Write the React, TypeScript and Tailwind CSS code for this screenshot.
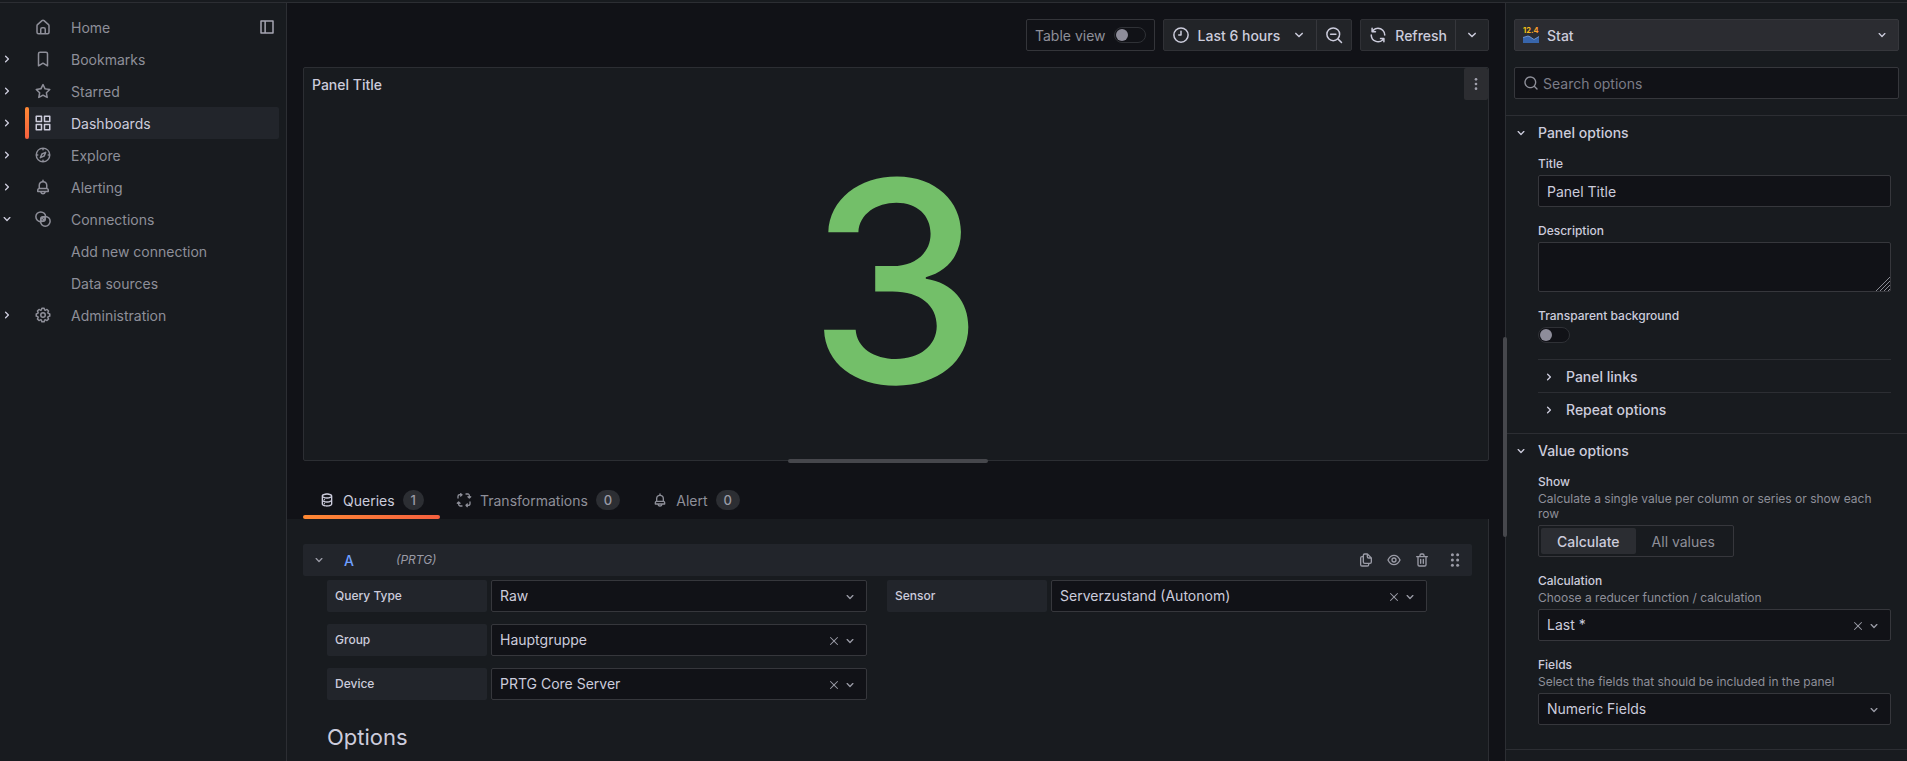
import { useState, type ReactNode } from "react";

const paths = {
  down: "M17,9.17a1,1,0,0,0-1.41,0L12,12.71,8.46,9.17a1,1,0,0,0-1.41,0,1,1,0,0,0,0,1.42l4.24,4.24a1,1,0,0,0,1.42,0L17,10.59A1,1,0,0,0,17,9.17Z",
  right: "M14.83,11.29,10.59,7.05a1,1,0,0,0-1.42,0,1,1,0,0,0,0,1.41L12.71,12,9.17,15.54a1,1,0,0,0,0,1.41,1,1,0,0,0,.71.29,1,1,0,0,0,.71-.29l4.24-4.24A1,1,0,0,0,14.83,11.29Z",
  home: "M20,8h0L14,2.74a3,3,0,0,0-4,0L4,8a3,3,0,0,0-1,2.26V19a3,3,0,0,0,3,3H18a3,3,0,0,0,3-3V10.25A3,3,0,0,0,20,8ZM14,20H10V15a1,1,0,0,1,1-1h2a1,1,0,0,1,1,1Zm5-1a1,1,0,0,1-1,1H16V15a3,3,0,0,0-3-3H11a3,3,0,0,0-3,3v5H6a1,1,0,0,1-1-1V10.25a1,1,0,0,1,.34-.75l6-5.25a1,1,0,0,1,1.32,0l6,5.25a1,1,0,0,1,.34.75Z",
  bookmark: "M16,2H8A3,3,0,0,0,5,5V21a1,1,0,0,0,.5.87,1,1,0,0,0,1,0L12,18.69l5.5,3.18A1,1,0,0,0,18,22a1,1,0,0,0,.5-.13A1,1,0,0,0,19,21V5A3,3,0,0,0,16,2Zm1,17.27-4.5-2.6a1,1,0,0,0-1,0L7,19.27V5A1,1,0,0,1,8,4h8a1,1,0,0,1,1,1Z",
  star: "M22,9.67A1,1,0,0,0,21.14,9l-5.69-.83L12.9,3a1,1,0,0,0-1.8,0L8.55,8.16,2.86,9a1,1,0,0,0-.81.68,1,1,0,0,0,.25,1l4.13,4-1,5.68A1,1,0,0,0,6.9,21.44L12,18.77l5.1,2.67a.93.93,0,0,0,.46.12,1,1,0,0,0,.59-.19,1,1,0,0,0,.4-1l-1-5.68,4.13-4A1,1,0,0,0,22,9.67Zm-6.15,4a1,1,0,0,0-.29.88l.72,4.2-3.76-2a1.06,1.06,0,0,0-.94,0l-3.76,2,.72-4.2a1,1,0,0,0-.29-.88l-3-3,4.21-.61a1,1,0,0,0,.76-.55L12,5.7l1.88,3.82a1,1,0,0,0,.76.55l4.21.61Z",
  apps: "M10,13H3a1,1,0,0,0-1,1v7a1,1,0,0,0,1,1h7a1,1,0,0,0,1-1V14A1,1,0,0,0,10,13ZM9,20H4V15H9ZM21,2H14a1,1,0,0,0-1,1v7a1,1,0,0,0,1,1h7a1,1,0,0,0,1-1V3A1,1,0,0,0,21,2ZM20,9H15V4h5Zm1,4H14a1,1,0,0,0-1,1v7a1,1,0,0,0,1,1h7a1,1,0,0,0,1-1V14A1,1,0,0,0,21,13Zm-1,7H15V15h5ZM10,2H3A1,1,0,0,0,2,3v7a1,1,0,0,0,1,1h7a1,1,0,0,0,1-1V3A1,1,0,0,0,10,2ZM9,9H4V4H9Z",
  compass: "M12,2A10,10,0,1,0,22,12,10,10,0,0,0,12,2Zm1,17.93V19a1,1,0,0,0-2,0v.93A8,8,0,0,1,4.07,13H5a1,1,0,0,0,0-2H4.07A8,8,0,0,1,11,4.07V5a1,1,0,0,0,2,0V4.07A8,8,0,0,1,19.93,11H19a1,1,0,0,0,0,2h.93A8,8,0,0,1,13,19.93ZM15.14,7.55l-5,2.12a1,1,0,0,0-.52.52l-2.12,5a1,1,0,0,0,.21,1.1,1,1,0,0,0,.7.29.93.93,0,0,0,.4-.09l5-2.12a1,1,0,0,0,.52-.52l2.12-5a1,1,0,0,0-1.31-1.3Zm-2.49,5.1-2.28,1,1-2.28,2.28-1Z",
  bell: "M18,13.18V10a6,6,0,0,0-5-5.91V3a1,1,0,0,0-2,0V4.09A6,6,0,0,0,6,10v3.18A3,3,0,0,0,4,16v2a1,1,0,0,0,1,1H8.14a4,4,0,0,0,7.72,0H19a1,1,0,0,0,1-1V16A3,3,0,0,0,18,13.18ZM8,10a4,4,0,0,1,8,0v3H8Zm4,10a2,2,0,0,1-1.72-1h3.44A2,2,0,0,1,12,20Zm6-3H6V16a1,1,0,0,1,1-1H17a1,1,0,0,1,1,1Z",
  cog: "M21.32,9.55l-1.89-.63.89-1.78A1,1,0,0,0,20.13,6L18,3.87a1,1,0,0,0-1.15-.19l-1.78.89-.63-1.89A1,1,0,0,0,13.5,2h-3a1,1,0,0,0-.95.68L8.92,4.57,7.14,3.68A1,1,0,0,0,6,3.87L3.87,6a1,1,0,0,0-.19,1.15l.89,1.78-1.89.63A1,1,0,0,0,2,10.5v3a1,1,0,0,0,.68.95l1.89.63-.89,1.78A1,1,0,0,0,3.87,18L6,20.13a1,1,0,0,0,1.15.19l1.78-.89.63,1.89a1,1,0,0,0,.95.68h3a1,1,0,0,0,.95-.68l.63-1.89,1.78.89A1,1,0,0,0,18,20.13L20.13,18a1,1,0,0,0,.19-1.15l-.89-1.78,1.89-.63A1,1,0,0,0,22,13.5v-3A1,1,0,0,0,21.32,9.55ZM20,12.78l-1.2.4A2,2,0,0,0,17.64,16l.57,1.14-1.1,1.1L16,17.64a2,2,0,0,0-2.79,1.16l-.4,1.2H11.22l-.4-1.2A2,2,0,0,0,8,17.64l-1.14.57-1.1-1.1L6.36,16A2,2,0,0,0,5.2,13.18L4,12.78V11.22l1.2-.4A2,2,0,0,0,6.36,8L5.79,6.89l1.1-1.1L8,6.36A2,2,0,0,0,10.82,5.2l.4-1.2h1.56l.4,1.2A2,2,0,0,0,16,6.36l1.14-.57,1.1,1.1L17.64,8a2,2,0,0,0,1.16,2.79l1.2.4ZM12,8a4,4,0,1,0,4,4A4,4,0,0,0,12,8Zm0,6a2,2,0,1,1,2-2A2,2,0,0,1,12,14Z",
  database: "M8,16.5a1,1,0,1,0,1,1A1,1,0,0,0,8,16.5ZM12,2C8,2,4,3.37,4,6V18c0,2.63,4,4,8,4s8-1.37,8-4V6C20,3.37,16,2,12,2Zm6,16c0,.71-2.28,2-6,2s-6-1.29-6-2V14.73A13.16,13.16,0,0,0,12,16a13.16,13.16,0,0,0,6-1.27Zm0-6c0,.71-2.28,2-6,2s-6-1.29-6-2V8.73A13.16,13.16,0,0,0,12,10a13.16,13.16,0,0,0,6-1.27Zm-6-4C8.28,8,6,6.71,6,6s2.28-2,6-2,6,1.29,6,2S15.72,8,12,8ZM8,10.5a1,1,0,1,0,1,1A1,1,0,0,0,8,10.5Z",
  sync: "M19.91,15.51H15.38a1,1,0,0,0,0,2h2.4A8,8,0,0,1,4,12a1,1,0,0,0-2,0,10,10,0,0,0,16.88,7.23V21a1,1,0,0,0,2,0V16.5A1,1,0,0,0,19.91,15.51ZM12,2A10,10,0,0,0,5.12,4.77V3a1,1,0,0,0-2,0V7.5a1,1,0,0,0,1,1h4.5a1,1,0,0,0,0-2H6.22A8,8,0,0,1,20,12a1,1,0,0,0,2,0A10,10,0,0,0,12,2Z",
  copy: "M21,8.94a1.31,1.31,0,0,0-.06-.27l0-.09a1.07,1.07,0,0,0-.19-.28h0l-6-6h0a1.07,1.07,0,0,0-.28-.19.32.32,0,0,0-.09,0A.88.88,0,0,0,14.05,2H10A3,3,0,0,0,7,5V6H6A3,3,0,0,0,3,9V19a3,3,0,0,0,3,3h8a3,3,0,0,0,3-3V18h1a3,3,0,0,0,3-3V9S21,9,21,8.94ZM15,5.41,17.59,8H16a1,1,0,0,1-1-1ZM15,19a1,1,0,0,1-1,1H6a1,1,0,0,1-1-1V9A1,1,0,0,1,6,8H7v7a3,3,0,0,0,3,3h5Zm4-4a1,1,0,0,1-1,1H10a1,1,0,0,1-1-1V5a1,1,0,0,1,1-1h3V7a3,3,0,0,0,3,3h3Z",
  eye: "M21.92,11.6C19.9,6.91,16.1,4,12,4S4.1,6.91,2.08,11.6a1,1,0,0,0,0,.8C4.1,17.09,7.9,20,12,20s7.9-2.91,9.92-7.6A1,1,0,0,0,21.92,11.6ZM12,18c-3.17,0-6.17-2.29-7.9-6C5.83,8.29,8.83,6,12,6s6.17,2.29,7.9,6C18.17,15.71,15.17,18,12,18ZM12,8a4,4,0,1,0,4,4A4,4,0,0,0,12,8Zm0,6a2,2,0,1,1,2-2A2,2,0,0,1,12,14Z",
  trash: "M10,18a1,1,0,0,0,1-1V11a1,1,0,0,0-2,0v6A1,1,0,0,0,10,18ZM20,6H16V5a3,3,0,0,0-3-3H11A3,3,0,0,0,8,5V6H4A1,1,0,0,0,4,8H5V19a3,3,0,0,0,3,3h8a3,3,0,0,0,3-3V8h1a1,1,0,0,0,0-2ZM10,5a1,1,0,0,1,1-1h2a1,1,0,0,1,1,1V6H10Zm7,14a1,1,0,0,1-1,1H8a1,1,0,0,1-1-1V8H17Zm-3-1a1,1,0,0,0,1-1V11a1,1,0,0,0-2,0v6A1,1,0,0,0,14,18Z",
  times: "M13.41,12l6.3-6.29a1,1,0,1,0-1.42-1.42L12,10.59,5.71,4.29A1,1,0,0,0,4.29,5.71L10.59,12l-6.3,6.29a1,1,0,0,0,0,1.42,1,1,0,0,0,1.42,0L12,13.41l6.29,6.3a1,1,0,0,0,1.42,0,1,1,0,0,0,0-1.42Z",
  search: "M21.71,20.29,18,16.61A9,9,0,1,0,16.61,18l3.68,3.68a1,1,0,0,0,1.42,0A1,1,0,0,0,21.71,20.29ZM11,18a7,7,0,1,1,7-7A7,7,0,0,1,11,18Z",
};

function Icon({ name, className = "size-4" }: { name: keyof typeof paths; className?: string }) {
  return (
    <svg viewBox="0 0 24 24" fill="currentColor" aria-hidden="true" className={`shrink-0 ${className}`}>
      <path d={paths[name]} />
    </svg>
  );
}

function LineIcon({ children, className = "size-4" }: { children: ReactNode; className?: string }) {
  return (
    <svg viewBox="0 0 24 24" fill="none" stroke="currentColor" strokeWidth="2" strokeLinecap="round" strokeLinejoin="round" aria-hidden="true" className={`shrink-0 ${className}`}>
      {children}
    </svg>
  );
}

const RingsIcon = () => (
  <LineIcon className="size-[18px]">
    <circle cx="9" cy="9" r="6.500" />
    <circle cx="15" cy="15" r="6.500" />
    <circle cx="12" cy="12" r="3" />
    <path d="M10 10 14 14" />
  </LineIcon>
);

const ProcessIcon = () => (
  <LineIcon>
    <path d="M3 9V6.500A2.500 2.500 0 0 1 5.500 4H9M9 4 7 2.500M9 4 7 6M15 3h3.500A2.500 2.500 0 0 1 20 5.500V9M20 9l-2-2M20 9l2-2M21 15v3a2.500 2.500 0 0 1-2.500 2H15M15 20l2-2M15 20l2 2M9 21H6a2.500 2.500 0 0 1-2-2.500V15M4 15l-2 2M4 15l2 2" />
  </LineIcon>
);

function Switch({ label, id }: { label: string; id: string }) {
  return (
    <input
      id={id}
      type="checkbox"
      role="switch"
      aria-label={label}
      className="block h-4 w-8 shrink-0 cursor-pointer appearance-none rounded-full border border-[#2f3136] bg-[#111217] before:mt-px before:ml-px before:block before:size-3 before:rounded-full before:bg-[#8e8d9a] checked:before:ml-4"
    />
  );
}

function Select({ id, value, clearable }: { id: string; value: string; clearable?: boolean }) {
  return (
    <div className="relative min-w-0 flex-1">
      <select
        id={id}
        className="block h-8 w-full appearance-none rounded-xs border border-[#36373c] bg-[#111217] px-2 text-sm text-[#ccccdc]"
      >
        <option>{value}</option>
      </select>
      <div className="pointer-events-none absolute inset-y-0 right-[9px] flex items-center gap-[2px] pt-px text-[#9a9ba6]">
        {clearable && (
          <button type="button" aria-label="Clear value" className="pointer-events-auto">
            <Icon name="times" className="size-3" />
          </button>
        )}
        <Icon name="down" />
      </div>
    </div>
  );
}

const navIcon = "size-[18px]";

const nav: { label: string; icon?: ReactNode; state?: "open" | "closed"; active?: boolean }[] = [
  { label: "Home", icon: <Icon name="home" className={navIcon} /> },
  { label: "Bookmarks", icon: <Icon name="bookmark" className={navIcon} />, state: "closed" },
  { label: "Starred", icon: <Icon name="star" className={navIcon} />, state: "closed" },
  { label: "Dashboards", icon: <Icon name="apps" className={navIcon} />, state: "closed", active: true },
  { label: "Explore", icon: <Icon name="compass" className={navIcon} />, state: "closed" },
  { label: "Alerting", icon: <Icon name="bell" className={navIcon} />, state: "closed" },
  { label: "Connections", icon: <RingsIcon />, state: "open" },
  { label: "Add new connection" },
  { label: "Data sources" },
  { label: "Administration", icon: <Icon name="cog" className={navIcon} />, state: "closed" },
];

function Sidebar() {
  return (
    <nav aria-label="Main" className="w-[287px] shrink-0 border-r border-[#2c2e33] bg-[#181b1f] pt-2">
      <ul>
        {nav.map((item) => (
          <li key={item.label} className="flex h-8 items-center pr-[7px] text-sm text-[#8e8f99]">
            <span className="flex w-[25px] shrink-0 items-center">
              {item.state && (
                <button type="button" aria-label={`${item.label} section`} className="flex w-[14px] justify-center text-[#ccccdc]">
                  <Icon name={item.state === "open" ? "down" : "right"} />
                </button>
              )}
            </span>
            <a
              href="#"
              className={
                item.active
                  ? "flex h-full flex-1 items-center rounded-xs bg-[#22252b] text-[#ccccdc]"
                  : "flex h-full flex-1 items-center"
              }
            >
              <span
                className={
                  item.active
                    ? "h-full w-1 rounded-xs bg-linear-to-b from-[#ff8833] to-[#f55f3e]"
                    : "h-full w-1"
                }
              />
              <span className="ml-[5px] flex w-[37px] shrink-0">{item.icon}</span>
              <span className="pt-0.5">{item.label}</span>
            </a>
            {item.label === "Home" && (
              <button type="button" aria-label="Undock menu" className="mr-[3px] text-[#a5a5b2]">
                <LineIcon className="size-[18px]">
                  <path d="M4 4h16v16H4ZM9.500 4v16" />
                </LineIcon>
              </button>
            )}
          </li>
        ))}
      </ul>
    </nav>
  );
}

function Toolbar() {
  const btn = "flex h-full items-center text-[#ccccdc]";
  return (
    <div className="flex justify-end gap-2 text-sm">
      <div className="flex h-8 items-center gap-2 rounded-xs border border-[#34353a] px-2 text-[#8e8f99]">
        <label htmlFor="table-view" className="pt-0.5">Table view</label>
        <Switch id="table-view" label="Table view" />
      </div>
      <div className="flex h-8 rounded-xs border border-[#303136] bg-[#222428] font-medium">
        <button type="button" className={`${btn} gap-2 px-2`}>
          <LineIcon className="size-[18px]">
            <circle cx="12" cy="12" r="9.500" />
            <path d="M12 7v5H9" />
          </LineIcon>
          <span className="pt-0.5">Last 6 hours</span>
          <span className="flex w-5 justify-end">
            <Icon name="down" className="size-[18px]" />
          </span>
        </button>
        <button type="button" aria-label="Zoom out time range" className={`${btn} border-l border-[#36373c] px-2`}>
          <LineIcon className="size-[18px]">
            <circle cx="11" cy="11" r="8.500" />
            <path d="M7.500 11h7M17.500 17.500 22 22" />
          </LineIcon>
        </button>
      </div>
      <div className="flex h-8 rounded-xs border border-[#303136] bg-[#222428] font-medium">
        <button type="button" className={`${btn} gap-2 px-2`}>
          <Icon name="sync" className="size-[18px]" />
          <span className="pt-0.5">Refresh</span>
        </button>
        <button type="button" aria-label="Refresh interval" className={`${btn} border-l border-[#36373c] px-[7px]`}>
          <Icon name="down" className="size-[18px]" />
        </button>
      </div>
    </div>
  );
}

function StatPanel() {
  return (
    <section className="flex h-[394px] flex-col rounded-xs border border-[#2c2e33] bg-[#181b1f]">
      <div className="flex h-8 items-center justify-between">
        <h2 className="pt-0.5 pl-2 text-sm font-medium text-[#ccccdc]">Panel Title</h2>
        <button type="button" aria-label="Panel menu" className="flex h-8 w-6 items-center justify-center rounded-xs bg-[#2c2d31] text-[#a0a0ac]">
          <svg viewBox="0 0 24 24" fill="currentColor" aria-hidden="true" className="size-4">
            <circle cx="12" cy="5" r="2" />
            <circle cx="12" cy="12" r="2" />
            <circle cx="12" cy="19" r="2" />
          </svg>
        </button>
      </div>
      <div className="flex flex-1 items-center justify-center pt-1 text-[280px] leading-none font-medium text-[#73bf69]">3</div>
    </section>
  );
}

const tabs = [
  { label: "Queries", count: 1, icon: <Icon name="database" /> },
  { label: "Transformations", count: 0, icon: <ProcessIcon /> },
  { label: "Alert", count: 0, icon: <Icon name="bell" /> },
];

function Tabs() {
  const [current, setCurrent] = useState("Queries");
  return (
    <div role="tablist" className="flex pt-6">
      {tabs.map((tab) => {
        const on = tab.label === current;
        return (
          <button
            key={tab.label}
            type="button"
            role="tab"
            aria-selected={on}
            onClick={() => setCurrent(tab.label)}
            className={on ? "flex flex-col text-[#ccccdc]" : "flex flex-col text-[#8e8f99]"}
          >
            <span className="flex h-[30px] items-center gap-2 px-4 text-sm">
              {tab.icon}
              <span className="pt-0.5">{tab.label}</span>
              <span className="rounded-full bg-[#2c2e33] px-2 py-px text-[13px] font-medium leading-[18px] text-[#9a9ba6]">{tab.count}</span>
            </span>
            <span className={on ? "h-1 w-full rounded-xs bg-linear-to-r from-[#ff8833] to-[#f55f3e]" : "h-1 w-full"} />
          </button>
        );
      })}
    </div>
  );
}

function Field({ label, id, value, clearable }: { label: string; id: string; value: string; clearable?: boolean }) {
  return (
    <div className="flex items-start gap-1">
      <label htmlFor={id} className="flex h-8 w-40 shrink-0 items-center rounded-xs bg-[#22252b] px-2 text-xs font-medium text-[#ccccdc]">
        {label}
      </label>
      <Select id={id} value={value} clearable={clearable} />
    </div>
  );
}

function QueryEditor() {
  return (
    <section className="flex-1 border-r border-[#2c2e33] bg-[#181b1f] px-4 pt-[25px]">
      <div className="flex h-8 items-center rounded-xs bg-[#22252b] px-2 text-[#9a9ba6]">
        <button type="button" aria-label="Collapse query row">
          <Icon name="down" />
        </button>
        <span className="ml-[17px] w-[52px] pt-0.5 text-sm font-medium text-[#6e9fff]">A</span>
        <span className="flex-1 text-xs italic">(PRTG)</span>
        <div className="flex items-center gap-3">
          <button type="button" aria-label="Duplicate query">
            <Icon name="copy" />
          </button>
          <button type="button" aria-label="Hide response">
            <Icon name="eye" />
          </button>
          <button type="button" aria-label="Remove query">
            <Icon name="trash" />
          </button>
          <button type="button" aria-label="Drag to reorder" className="ml-1">
            <svg viewBox="0 0 24 24" fill="currentColor" aria-hidden="true" className="size-[18px]">
              <circle cx="8.500" cy="5" r="2" />
              <circle cx="15.500" cy="5" r="2" />
              <circle cx="8.500" cy="12" r="2" />
              <circle cx="15.500" cy="12" r="2" />
              <circle cx="8.500" cy="19" r="2" />
              <circle cx="15.500" cy="19" r="2" />
            </svg>
          </button>
        </div>
      </div>
      <div className="mt-1 mr-[45px] ml-6 grid grid-cols-2 gap-x-5">
        <div className="flex flex-col gap-3">
          <Field label="Query Type" id="query-type" value="Raw" />
          <Field label="Group" id="group" value="Hauptgruppe" clearable />
          <Field label="Device" id="device" value="PRTG Core Server" clearable />
        </div>
        <Field label="Sensor" id="sensor" value="Serverzustand (Autonom)" clearable />
      </div>
      <h3 className="mt-6 ml-6 text-[22px] leading-[26px] text-[#ccccdc]">Options</h3>
    </section>
  );
}

function OptionGroup({ title, children }: { title: string; children: ReactNode }) {
  return (
    <section className="border-t border-[#2c2e33]">
      <button type="button" aria-expanded="true" className="flex h-[34px] w-full items-center gap-[9px] pl-[7px] text-sm font-medium text-[#ccccdc]">
        <Icon name="down" />
        {title}
      </button>
      <div className="pr-4 pl-8">{children}</div>
    </section>
  );
}

function NestedGroup({ title }: { title: string }) {
  return (
    <button type="button" aria-expanded="false" className="flex h-[33px] w-full items-center gap-[9px] border-t border-[#2c2e33] pt-0.5 pl-[3px] text-sm font-medium text-[#ccccdc]">
      <Icon name="right" />
      {title}
    </button>
  );
}

const labelClass = "block text-xs leading-[15px] font-medium text-[#ccccdc]";
const hintClass = "mt-[2px] mb-1 text-xs leading-[15px] text-[#8e8f99]";

function StatIcon() {
  return (
    <svg viewBox="0 0 16 16" aria-hidden="true" className="size-4 overflow-visible">
      <defs>
        <linearGradient id="stat-number" x1="0" x2="1">
          <stop offset="0" stopColor="#f2cc0c" />
          <stop offset="1" stopColor="#ff9830" />
        </linearGradient>
      </defs>
      <text x="0" y="6" fontSize="7.500" fontWeight="700" fill="url(#stat-number)" fontFamily="Inter, sans-serif">12.4</text>
      <path d="M0 10.500 5 9l2 .8 4 2.700L16 9.500V16H0Z" fill="#3865ab" />
      <path d="M0 10.500 5 9l2 .8 4 2.700L16 9.500" fill="none" stroke="#84aff1" strokeWidth=".7" />
    </svg>
  );
}

function OptionsPane() {
  return (
    <aside className="relative flex w-[402px] shrink-0 flex-col border-l border-[#2c2e33] bg-[#181b1f]">
      <div className="absolute top-[334px] -left-[3px] h-[200px] w-1 rounded-full bg-[#46474c]" />
      <div className="flex flex-col gap-4 px-2 py-4">
        <button type="button" className="flex h-8 items-center gap-2 rounded-xs border border-[#36373c] bg-[#2b2c31] px-2 text-sm font-medium text-[#ccccdc]">
          <StatIcon />
          <span className="flex-1 pt-0.5 text-left">Stat</span>
          <Icon name="down" />
        </button>
        <div className="flex h-8 items-center gap-1 rounded-xs border border-[#36373c] bg-[#111217] px-2 text-[#8e8f99]">
          <Icon name="search" />
          <input aria-label="Search options" placeholder="Search options" className="min-w-0 flex-1 bg-transparent pt-0.5 text-sm outline-none placeholder:text-[#7b7c87]" />
        </div>
      </div>
      <OptionGroup title="Panel options">
        <label htmlFor="title" className={`${labelClass} mt-[6px] mb-1`}>Title</label>
        <input id="title" defaultValue="Panel Title" className="block h-8 w-full rounded-xs border border-[#36373c] bg-[#111217] px-2 text-sm text-[#ccccdc]" />
        <label htmlFor="description" className={`${labelClass} mt-4 mb-1`}>Description</label>
        <div className="relative">
          <textarea id="description" className="block h-[50px] w-full resize-none rounded-xs border border-[#36373c] bg-[#111217] px-2 text-sm text-[#ccccdc]" />
          <svg viewBox="0 0 15 15" fill="none" stroke="#8a8b93" aria-hidden="true" className="pointer-events-none absolute right-px bottom-px size-[15px]">
            <path d="M1 15 15 1M5 15 15 5M9 15l6-6M13 15l2-2" />
          </svg>
        </div>
        <label htmlFor="transparent" className={`${labelClass} mt-4 mb-1`}>Transparent background</label>
        <Switch id="transparent" label="Transparent background" />
        <div className="mt-4 mb-2">
          <NestedGroup title="Panel links" />
          <NestedGroup title="Repeat options" />
        </div>
      </OptionGroup>
      <OptionGroup title="Value options">
        <p className={`${labelClass} mt-[6px]`}>Show</p>
        <p className={hintClass}>Calculate a single value per column or series or show each row</p>
        <div className="inline-flex h-8 rounded-xs border border-[#36373c] p-[2px] align-top text-sm">
          <label className="flex cursor-pointer items-center rounded-xs px-4 pt-0.5 text-[#8e8f99] has-checked:bg-[#2b2d32] has-checked:font-medium has-checked:text-[#ccccdc]">
            <input type="radio" name="show" defaultChecked className="sr-only" />
            Calculate
          </label>
          <label className="flex cursor-pointer items-center rounded-xs px-4 pt-0.5 text-[#8e8f99] has-checked:bg-[#2b2d32] has-checked:font-medium has-checked:text-[#ccccdc]">
            <input type="radio" name="show" className="sr-only" />
            All values
          </label>
        </div>
        <label htmlFor="calculation" className={`${labelClass} mt-4`}>Calculation</label>
        <p className={hintClass}>Choose a reducer function / calculation</p>
        <Select id="calculation" value="Last *" clearable />
        <label htmlFor="fields" className={`${labelClass} mt-4`}>Fields</label>
        <p className={hintClass}>Select the fields that should be included in the panel</p>
        <Select id="fields" value="Numeric Fields" />
      </OptionGroup>
      <div className="mt-6 border-t border-[#2c2e33]" />
    </aside>
  );
}

export default function App() {
  return (
    <div className="flex min-h-screen flex-col bg-[#111217] font-['Inter',sans-serif] text-[#ccccdc]">
      <div className="h-[3px] border-b border-[#2c2e33] bg-[#181b1f]" />
      <div className="flex flex-1">
        <Sidebar />
        <main className="flex min-w-0 flex-1 flex-col pr-4">
          <div className="relative flex flex-col gap-4 pt-4 pl-4">
            <Toolbar />
            <StatPanel />
            <div className="absolute -bottom-[2px] left-1/2 h-1 w-[200px] -translate-x-1/2 rounded-full bg-[#46474c]" />
          </div>
          <div className="pl-4">
            <Tabs />
          </div>
          <QueryEditor />
        </main>
        <OptionsPane />
      </div>
    </div>
  );
}
